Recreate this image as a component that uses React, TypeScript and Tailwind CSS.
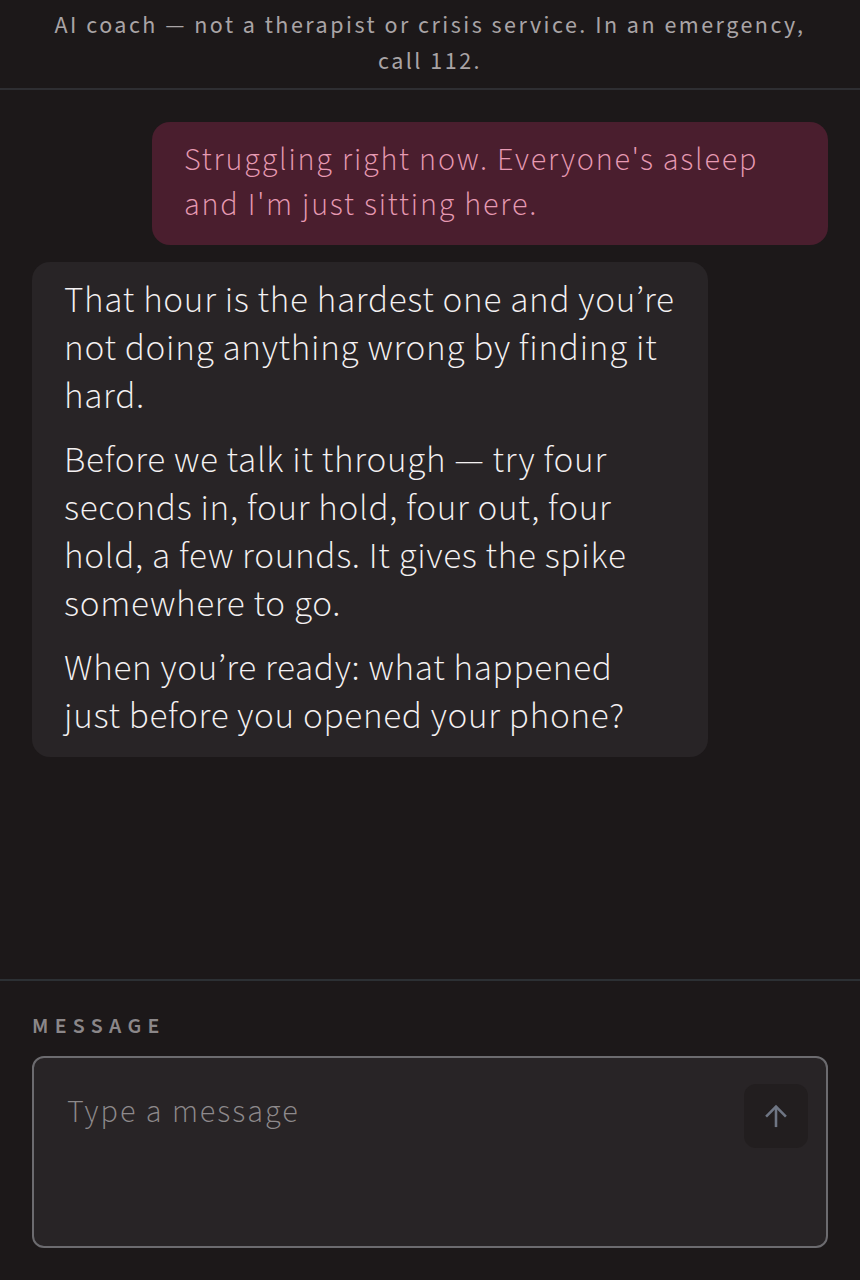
import React from "react";

const font = { fontFamily: '"Source Sans 3", "Source Sans Pro", "Liberation Sans Narrow", "Noto Sans", sans-serif' };

export default function App() {
  return (
    <div
      className="flex h-[1280px] w-full flex-col bg-[#1c1819] text-white"
      style={font}
    >
      <header className="border-b-2 border-[#2e2e32] px-4 pt-[8px] pb-[8px] text-center text-[24px] font-normal leading-[36px] tracking-[2.5px] text-[#a9a4a6]">
        AI coach — not a therapist or crisis service. In an emergency,
        <br />
        call 112.
      </header>

      <main className="flex flex-1 flex-col gap-[17px] px-8 pt-8">
        <div className="self-end w-[676px] rounded-[18px] bg-[#4a1e2e] pl-8 pr-2 pt-4 pb-[17px] text-[32px] font-light leading-[45px] tracking-[1.8px] text-[#e79ab3]">
          Struggling right now. Everyone's asleep
          <br />
          and I'm just sitting here.
        </div>

        <div className="self-start w-[676px] rounded-[18px] bg-[#282426] pl-8 pr-2 pt-[15px] pb-[16px] text-[37px] font-light leading-[48px] tracking-[0.7px] text-[#f4f1f2]">
          <p>
            That hour is the hardest one and you’re
            <br />
            not doing anything wrong by finding it
            <br />
            hard.
          </p>
          <p className="mt-4">
            Before we talk it through — try four
            <br />
            seconds in, four hold, four out, four
            <br />
            hold, a few rounds. It gives the spike
            <br />
            somewhere to go.
          </p>
          <p className="mt-4">
            When you’re ready: what happened
            <br />
            just before you opened your phone?
          </p>
        </div>
      </main>

      <footer className="border-t-2 border-[#2c3034] px-8 pt-[31px] pb-8">
        <div className="text-[22px] font-semibold leading-[28px] tracking-[6.3px] text-[#8b8789]">MESSAGE</div>
        <div className="mt-[16px] flex h-[192px] items-start justify-between rounded-[12px] border-2 border-[#6c6b6f] bg-[#282426] pl-[33px] pr-[18px] pt-[26px]">
          <span className="pt-[12px] text-[32px] font-light leading-[32px] tracking-[2px] text-[#8e8a8c]">Type a message</span>
          <button className="flex h-[64px] w-[64px] items-center justify-center rounded-[12px] bg-[#221e1f] text-[#6f7684]">
            <svg width="28" height="28" viewBox="0 0 24 24" fill="none" stroke="currentColor" strokeWidth="2.2" strokeLinecap="butt" strokeLinejoin="miter">
              <path d="M12 21.5V4" />
              <path d="M3.5 12.5L12 4l8.5 8.5" />
            </svg>
          </button>
        </div>
      </footer>
    </div>
  );
}
